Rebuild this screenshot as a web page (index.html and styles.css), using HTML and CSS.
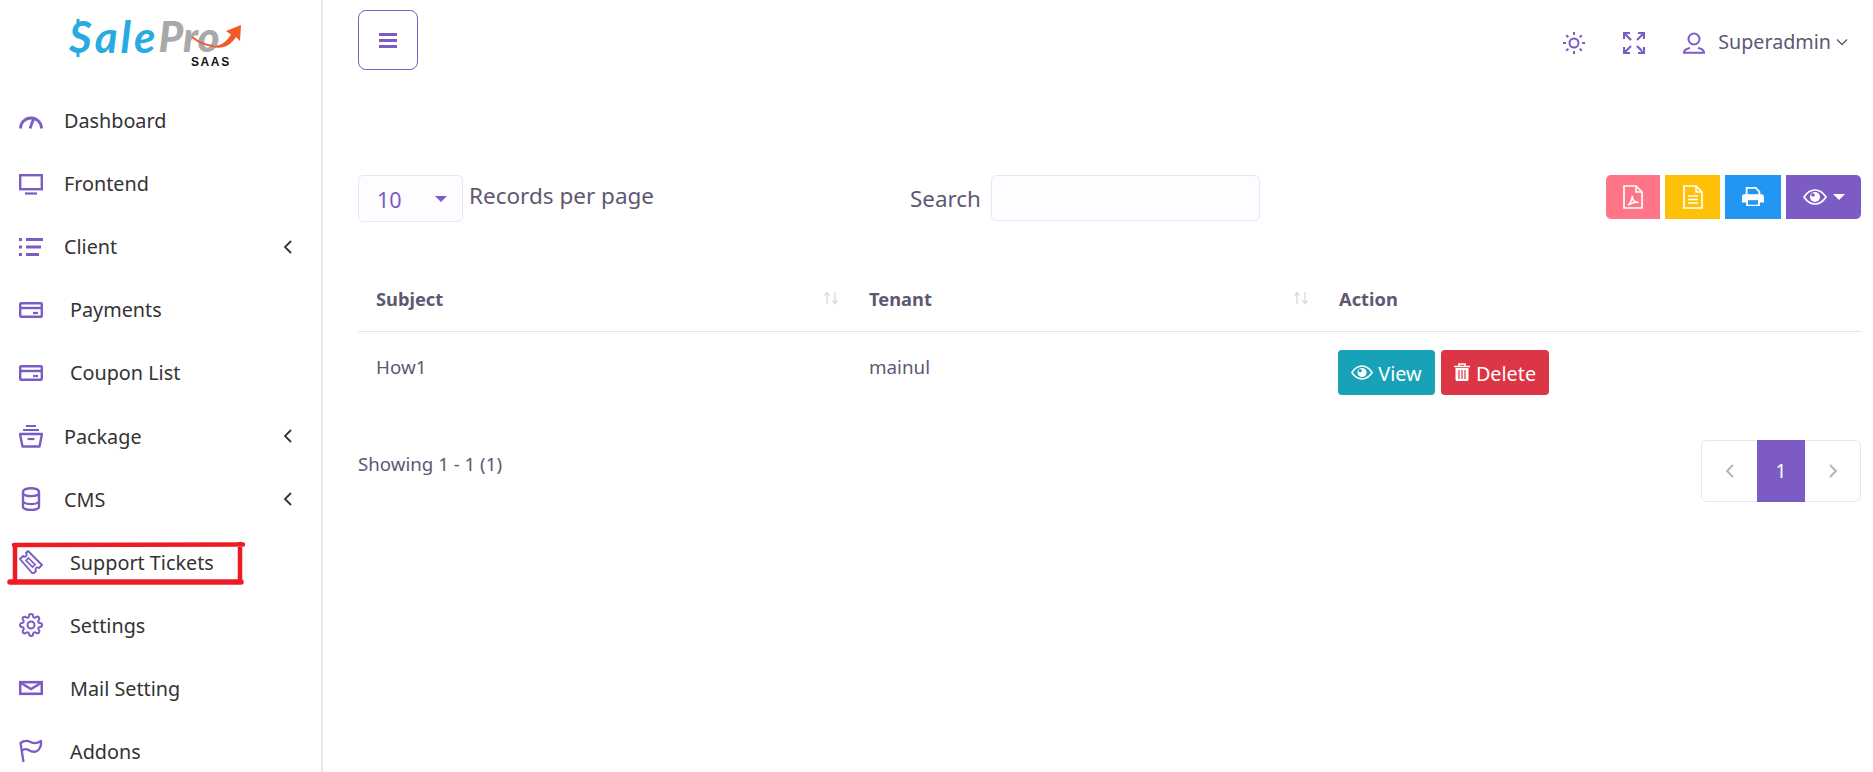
FILE: index.html
```html
<!DOCTYPE html>
<html lang="en">
<head>
<meta charset="utf-8">
<title>Support Tickets</title>
<link rel="stylesheet" href="styles.css">
</head>
<body>
<svg class="defs" width="0" height="0" aria-hidden="true">
  <symbol id="i-card" viewBox="0 0 24 24"><rect x="1.200" y="5.200" width="21.600" height="13.600" rx="1" fill="none" stroke="currentColor" stroke-width="2.400"/><path d="M1 10h22" stroke="currentColor" stroke-width="2.400"/><path d="M14 15h5" stroke="currentColor" stroke-width="2.200"/></symbol>
  <symbol id="i-eye" viewBox="0 0 24 16"><path d="M1 8c3-4.600 6.800-7 11-7s8 2.400 11 7c-3 4.600-6.800 7-11 7S4 12.600 1 8z" fill="none" stroke="currentColor" stroke-width="1.700"/><circle cx="12" cy="8" r="5" fill="currentColor"/><circle cx="10" cy="6" r="1.800" fill="var(--eye-bg)"/></symbol>
  <symbol id="i-chev" viewBox="0 0 10 16"><path d="M8 2 2 8l6 6" fill="none" stroke="currentColor" stroke-width="1.800"/></symbol>
  <symbol id="i-sort" viewBox="0 0 18 14"><path d="M5 13V2M2.500 4.500 5 1.500l2.500 3M13 1v11M10.500 9.500l2.500 3 2.500-3" fill="none" stroke="currentColor" stroke-width="1.300"/></symbol>
</svg>

<div class="app">
  <aside class="sidebar">
    <div class="logo">
      <div class="logo-word">
        <span class="logo-sale">Sale</span><span class="logo-pro">Pro</span>
        <svg class="logo-arrow" viewBox="0 0 52 28" aria-hidden="true"><path d="M2 15c6 5 13 8 21 9" fill="none" stroke="#f15a29" stroke-width="1.800"/><path d="M21 24.500C32 24 37 19 41 12.500L36 9 51 3 50 19 46 15C40 24 32 28 21 24.500z" fill="#f15a29"/></svg>
        <svg class="logo-ticks" viewBox="0 0 6 38" aria-hidden="true"><path d="M3 0v4M3 34v4" stroke="#29abe2" stroke-width="3"/></svg>
      </div>
      <div class="logo-saas">SAAS</div>
    </div>
    <nav class="nav">
      <a class="nav-item">
        <svg class="nav-icon" viewBox="0 0 24 24"><path d="M1.500 19.500A10.500 10.500 0 0 1 12 9a10.500 10.500 0 0 1 10.500 10.500" fill="none" stroke="currentColor" stroke-width="2.800"/><path d="M11 19.500 14.500 10" stroke="currentColor" stroke-width="2.800"/></svg>
        <span class="nav-label">Dashboard</span>
      </a>
      <a class="nav-item">
        <svg class="nav-icon" viewBox="0 0 24 24"><rect x="1.200" y="3.200" width="21.600" height="14" fill="none" stroke="currentColor" stroke-width="2.400"/><path d="M6 21.500h12" stroke="currentColor" stroke-width="2.200"/></svg>
        <span class="nav-label">Frontend</span>
      </a>
      <a class="nav-item">
        <svg class="nav-icon" viewBox="0 0 24 24"><path d="M7 4.500h17M7 12h15M7 19.500h13" stroke="currentColor" stroke-width="2.800"/><path d="M0 4.500h3M0 12h3M0 19.500h3" stroke="currentColor" stroke-width="2.800"/></svg>
        <span class="nav-label">Client</span>
        <svg class="nav-chev"><use href="#i-chev"/></svg>
      </a>
      <a class="nav-item nav-sub">
        <svg class="nav-icon"><use href="#i-card"/></svg>
        <span class="nav-label">Payments</span>
      </a>
      <a class="nav-item nav-sub">
        <svg class="nav-icon"><use href="#i-card"/></svg>
        <span class="nav-label">Coupon List</span>
      </a>
      <a class="nav-item">
        <svg class="nav-icon" viewBox="0 0 24 24"><path d="M7 2h10M4 6h16" stroke="currentColor" stroke-width="2.200"/><path d="M1 10h22l-2.500 12.500h-17z" fill="none" stroke="currentColor" stroke-width="2.400" stroke-linejoin="round"/><path d="M8.500 15h7" stroke="currentColor" stroke-width="2.200"/></svg>
        <span class="nav-label">Package</span>
        <svg class="nav-chev"><use href="#i-chev"/></svg>
      </a>
      <a class="nav-item">
        <svg class="nav-icon" viewBox="0 0 24 24"><path d="M4 5c0-2.500 4-3.800 8-3.800s8 1.300 8 3.800v15c0 1.800-4 3-8 3s-8-1.200-8-3z" fill="none" stroke="currentColor" stroke-width="2.400"/><path d="M4 6c0 2 4 3.200 8 3.200S20 8 20 6M4 15c2 1.600 5 2.200 8 2.200s6-.6 8-2.200" fill="none" stroke="currentColor" stroke-width="2.200"/></svg>
        <span class="nav-label">CMS</span>
        <svg class="nav-chev"><use href="#i-chev"/></svg>
      </a>
      <a class="nav-item nav-sub">
        <svg class="nav-icon" viewBox="0 0 24 24"><path d="M9 1 23 15l-3 3c-1.300-1-2.700-.7-3.200.3-.5 1-.4 2 .2 2.700l-3 3L1 9l3-3c1 .8 2.300.8 3 0s.8-2 0-3z" fill="none" stroke="currentColor" stroke-width="1.900" stroke-linejoin="round"/><path d="m9.500 8 6.500 6.500-2.500 2.500L7 10.500z" fill="none" stroke="currentColor" stroke-width="1.700"/></svg>
        <span class="nav-label">Support Tickets</span>
        <svg class="annotation" viewBox="0 0 240 46" aria-hidden="true"><path d="M3 41 234 41" fill="none" stroke="#ed1c24" stroke-width="5.500" stroke-linecap="round"/><path d="M8 41V4M7 4l229-.5M233 3v38" fill="none" stroke="#ed1c24" stroke-width="4.500" stroke-linecap="round"/></svg>
      </a>
      <a class="nav-item nav-sub">
        <svg class="nav-icon" viewBox="0 0 24 24"><circle cx="12" cy="12" r="3.500" fill="none" stroke="currentColor" stroke-width="2"/><path d="M19.400 15a1.650 1.650 0 0 0 .33 1.820l.06.06a2 2 0 0 1 0 2.830 2 2 0 0 1-2.830 0l-.06-.06a1.650 1.650 0 0 0-1.820-.33 1.650 1.650 0 0 0-1 1.510V21a2 2 0 0 1-2 2 2 2 0 0 1-2-2v-.09A1.650 1.650 0 0 0 9 19.400a1.650 1.650 0 0 0-1.820.33l-.06.06a2 2 0 0 1-2.830 0 2 2 0 0 1 0-2.830l.06-.06a1.650 1.650 0 0 0 .33-1.820 1.650 1.650 0 0 0-1.510-1H3a2 2 0 0 1-2-2 2 2 0 0 1 2-2h.09A1.650 1.650 0 0 0 4.600 9a1.650 1.650 0 0 0-.33-1.820l-.06-.06a2 2 0 0 1 0-2.830 2 2 0 0 1 2.830 0l.06.06a1.650 1.650 0 0 0 1.820.33H9a1.650 1.650 0 0 0 1-1.510V3a2 2 0 0 1 2-2 2 2 0 0 1 2 2v.09a1.650 1.650 0 0 0 1 1.510 1.650 1.650 0 0 0 1.820-.33l.06-.06a2 2 0 0 1 2.830 0 2 2 0 0 1 0 2.830l-.06.06a1.650 1.650 0 0 0-.33 1.820V9a1.650 1.650 0 0 0 1.510 1H21a2 2 0 0 1 2 2 2 2 0 0 1-2 2h-.09a1.650 1.650 0 0 0-1.510 1z" fill="none" stroke="currentColor" stroke-width="2"/></svg>
        <span class="nav-label">Settings</span>
      </a>
      <a class="nav-item nav-sub">
        <svg class="nav-icon" viewBox="0 0 24 24"><rect x="1.200" y="6.200" width="21.600" height="11.600" fill="none" stroke="currentColor" stroke-width="2.600"/><path d="m2 7 10 6 10-6" fill="none" stroke="currentColor" stroke-width="2.400"/></svg>
        <span class="nav-label">Mail Setting</span>
      </a>
      <a class="nav-item nav-sub">
        <svg class="nav-icon" viewBox="0 0 24 24"><path d="M4.500 23 1.500 4c4-3 7-2.500 10-1s6 2 10.500-1c.5 4-1 8.500-4 10s-6 .5-8.500-1-4.500-1-6.200.5" fill="none" stroke="currentColor" stroke-width="2.300" stroke-linejoin="round"/></svg>
        <span class="nav-label">Addons</span>
      </a>
    </nav>
  </aside>

  <main class="main">
    <header class="topbar">
      <button class="toggle" type="button" aria-label="Toggle menu">
        <svg viewBox="0 0 18 15" class="toggle-icon"><path d="M0 1.500h18M0 7.500h18M0 13.500h18" stroke="currentColor" stroke-width="2.800"/></svg>
      </button>
      <div class="topbar-right">
        <svg class="top-icon" viewBox="0 0 22 22"><circle cx="11" cy="11" r="4.500" fill="none" stroke="currentColor" stroke-width="2"/><path d="M11 0v3M11 19v3M0 11h3M19 11h3M3.200 3.200l2.200 2.200M16.600 16.600l2.200 2.200M3.200 18.800l2.200-2.200M16.600 5.400l2.200-2.200" stroke="currentColor" stroke-width="2"/></svg>
        <svg class="top-icon top-expand" viewBox="0 0 22 22"><path d="M1 7V1h6M15 1h6v6M21 15v6h-6M7 21H1v-6M1.500 1.500l6.500 6.500M20.500 1.500 14 8M20.500 20.500 14 14M1.500 20.500 8 14" fill="none" stroke="currentColor" stroke-width="2.200"/></svg>
        <div class="user">
          <svg class="top-icon" viewBox="0 0 22 22"><circle cx="11" cy="7" r="5.500" fill="none" stroke="currentColor" stroke-width="2"/><path d="M1 20.500c.5-3 3-4 6-4.500M21 20.500c-.5-3-3-4-6-4.500M0 20.800h22" fill="none" stroke="currentColor" stroke-width="2"/></svg>
          <span class="user-name">Superadmin</span>
          <svg class="user-chev" viewBox="0 0 12 8"><path d="m1 1.500 5 5 5-5" fill="none" stroke="currentColor" stroke-width="1.400"/></svg>
        </div>
      </div>
    </header>

    <section class="controls">
      <div class="length">
        <div class="select"><span>10</span><i class="caret"></i></div>
        <span class="length-label">Records per page</span>
      </div>
      <label class="search"><span class="search-label">Search</span><input class="search-input" type="search"></label>
      <div class="exports">
        <button class="exp exp-pdf" type="button" aria-label="PDF">
          <svg viewBox="0 0 20 24" class="exp-icon"><path d="M1 1h12l6 6v16H1z" fill="none" stroke="currentColor" stroke-width="1.700"/><path d="M13 1v6h6" fill="none" stroke="currentColor" stroke-width="1.500"/><path d="M5 20c2-1 3.500-4 4.500-9-.5 4 1 6 6 6.500-3.500-.5-7 .5-10.500 2.500z" fill="none" stroke="currentColor" stroke-width="1.500"/></svg>
        </button>
        <button class="exp exp-csv" type="button" aria-label="CSV">
          <svg viewBox="0 0 20 24" class="exp-icon"><path d="M1 1h12l6 6v16H1z" fill="none" stroke="currentColor" stroke-width="1.700"/><path d="M13 1v6h6M5 11h10M5 14.500h10M5 18h10" fill="none" stroke="currentColor" stroke-width="1.500"/></svg>
        </button>
        <button class="exp exp-print" type="button" aria-label="Print">
          <svg viewBox="0 0 24 22" class="exp-icon exp-icon-print"><path d="M5 9V1h10l4 4v4" fill="none" stroke="currentColor" stroke-width="2"/><path d="M2.500 8h19A2.500 2.500 0 0 1 24 10.500V17h-4.500v4h-15v-4H0v-6.500A2.500 2.500 0 0 1 2.500 8z" fill="currentColor"/><rect x="6.500" y="14.500" width="11" height="5" fill="#2196f3"/></svg>
        </button>
        <button class="exp exp-col" type="button" aria-label="Columns">
          <svg class="exp-eye"><use href="#i-eye"/></svg><i class="caret caret-white"></i>
        </button>
      </div>
    </section>

    <table class="table">
      <colgroup><col class="col-a"><col class="col-b"><col></colgroup>
      <thead>
        <tr>
          <th><div class="th-in">Subject<svg class="sort"><use href="#i-sort"/></svg></div></th>
          <th><div class="th-in">Tenant<svg class="sort"><use href="#i-sort"/></svg></div></th>
          <th>Action</th>
        </tr>
      </thead>
      <tbody>
        <tr>
          <td>How1</td>
          <td>mainul</td>
          <td class="td-actions">
            <button class="act act-view" type="button"><svg class="act-eye"><use href="#i-eye"/></svg><span class="act-text">View</span></button>
            <button class="act act-del" type="button">
              <svg class="act-trash" viewBox="0 0 16 18"><path d="M0 3.500h16M5 3V1h6v2" fill="none" stroke="currentColor" stroke-width="1.600"/><path d="M1.500 5h13v11.500a1.500 1.500 0 0 1-1.500 1.500H3a1.500 1.500 0 0 1-1.500-1.500z" fill="currentColor"/><path d="M5 7v9M8 7v9M11 7v9" stroke="#dc3545" stroke-width="1.200"/></svg><span class="act-text">Delete</span>
            </button>
          </td>
        </tr>
      </tbody>
    </table>

    <footer class="foot">
      <span class="showing">Showing 1 - 1 (1)</span>
      <div class="pager">
        <span class="pg"><svg class="pg-chev"><use href="#i-chev"/></svg></span>
        <span class="pg pg-active">1</span>
        <span class="pg"><svg class="pg-chev pg-next"><use href="#i-chev"/></svg></span>
      </div>
    </footer>
  </main>
</div>
</body>
</html>
```

FILE: styles.css
```css
* { box-sizing: border-box; }
html, body { margin: 0; height: 100%; overflow: hidden; }
body {
  font-family: "Noto Sans", "Open Sans", sans-serif;
  background: #fff;
  color: #5e5873;
  --purple: #7c5cc4;
  --eye-bg: #fff;
}
.defs { position: absolute; }
.app { display: flex; height: 772px; }

/* Sidebar */
.sidebar { width: 323px; flex: none; border-right: 2px solid #e8e8f4; overflow: hidden; }
.logo { height: 89px; padding: 17px 0 0 69px; position: relative; }
.logo-word { position: relative; display: flex; width: 172px; height: 38px; font-family: Lato, sans-serif; font-style: italic; font-size: 44px; line-height: 38px; }
.logo-sale { color: #29abe2; font-weight: 700; letter-spacing: 3px; }
.logo-pro { color: #a8a9ab; font-weight: 900; font-size: 42px; margin-left: 0; }
.logo-arrow { position: absolute; left: 121px; top: 5px; width: 52px; height: 28px; }
.logo-ticks { position: absolute; left: 6px; top: 2px; width: 6px; height: 38px; }
.logo-saas { position: absolute; left: 191px; top: 56px; font-family: "Liberation Sans", sans-serif; font-weight: 700; font-size: 12px; line-height: 13px; letter-spacing: 1.600px; color: #111; }
.nav { display: flex; flex-direction: column; }
.nav-item { position: relative; display: flex; align-items: center; height: 63.100px; flex: none; padding: 0 28px 0 19px; color: #333; font-size: 19.800px; }
.nav-icon { width: 24px; height: 24px; flex: none; color: var(--purple); }
.nav-label { margin-left: 21px; }
.nav-sub .nav-label { margin-left: 27px; }
.nav-chev { width: 10px; height: 16px; margin-left: auto; color: #333; }
.annotation { position: absolute; left: 7px; top: 10px; width: 240px; height: 46px; }

/* Main */
.main { flex: 1; min-width: 0; padding: 10px 12px 0 35px; }
.topbar { display: flex; justify-content: space-between; align-items: center; height: 60px; margin-bottom: 105px; }
.toggle { width: 60px; height: 60px; padding: 0; display: flex; align-items: center; justify-content: center; background: #fff; border: 1px solid var(--purple); border-radius: 8px; color: var(--purple); }
.toggle-icon { width: 18px; height: 15px; }
.topbar-right { display: flex; align-items: center; padding: 6px 13px 0 0; color: var(--purple); }
.top-icon { width: 22px; height: 22px; flex: none; }
.top-expand { margin-left: 38px; }
.user { display: flex; align-items: center; margin-left: 38px; }
.user-name { margin-left: 13px; font-size: 19.700px; color: #5e5873; position: relative; top: -2px; }
.user-chev { width: 12px; height: 8px; margin-left: 5px; color: #5e5873; position: relative; top: -1px; }

/* Controls */
.controls { display: grid; grid-template-columns: 552px 696px 1fr; height: 47px; }
.length { display: flex; align-items: center; }
.select { width: 105px; height: 47px; display: flex; align-items: center; justify-content: space-between; padding: 0 15px 0 18px; background: #fdfcff; border: 1px solid #e9e6fb; border-radius: 5px; color: var(--purple); font-size: 21.500px; }
.select span { position: relative; top: 1px; }
.caret { width: 0; height: 0; border-left: 6px solid transparent; border-right: 6px solid transparent; border-top: 6px solid var(--purple); display: block; }
.caret-white { border-top-color: #fff; }
.length-label { margin: -6px 0 0 6px; font-size: 22.500px; }
.search { display: flex; align-items: flex-start; height: 47px; }
.search-label { font-size: 22.400px; width: 81px; line-height: 47px; }
.search-input { width: 269px; height: 46px; background: #fdfcff; border: 1px solid #e9e6fb; border-radius: 5px; outline: none; }
.exports { display: flex; justify-content: flex-end; gap: 5px; height: 44px; }
.exp { height: 44px; border: 0; padding: 0; color: #fff; display: flex; align-items: center; justify-content: center; }
.exp-pdf { width: 54px; background: #ff7588; border-radius: 5px 0 0 5px; }
.exp-csv { width: 55px; background: #ffc107; }
.exp-print { width: 56px; background: #2196f3; }
.exp-col { width: 75px; background: #7c5cc4; border-radius: 0 5px 5px 0; gap: 6px; --eye-bg: #7c5cc4; }
.exp-icon { width: 20px; height: 24px; }
.exp-icon-print { width: 22px; height: 20px; }
.exp-eye { width: 24px; height: 16px; }

/* Table */
.table { width: 100%; margin-top: 44px; border-collapse: collapse; table-layout: fixed; font-size: 18.800px; }
.col-a { width: 493px; }
.col-b { width: 470px; }
th { height: 65px; padding: 0 11px 0 18px; text-align: left; font-weight: 700; font-size: 18.300px; border-bottom: 1px solid #e4e4e9; }
.th-in { display: flex; justify-content: space-between; align-items: center; }
.sort { width: 18px; height: 14px; color: #d8d8e4; }
td { padding: 22px 18px 0; vertical-align: top; line-height: 26px; }
.td-actions { padding: 18px 0 18px 17px; display: flex; gap: 6px; }
.act { height: 45px; border: 0; border-radius: 4px; color: #fff; font: inherit; font-size: 19.800px; display: flex; align-items: center; justify-content: center; padding: 0; }
.act-text { position: relative; top: 2px; }
.act-view { width: 97px; background: #17a2b8; gap: 5px; --eye-bg: #17a2b8; }
.act-del { width: 108px; background: #dc3545; gap: 6px; }
.act-eye { width: 22px; height: 15px; }
.act-trash { width: 16px; height: 18px; }

/* Footer */
.foot { display: flex; justify-content: space-between; align-items: flex-start; margin-top: 27px; }
.showing { font-size: 18.700px; line-height: 26px; margin-top: 11px; }
.pager { display: flex; height: 62px; width: 160px; border: 1px solid #e6e8ec; border-radius: 6px; }
.pg { flex: 1; display: flex; align-items: center; justify-content: center; color: #aeb2ba; }
.pg-active { flex: none; width: 48px; margin: -1px 0; background: #7c5cc4; color: #fff; font-size: 19px; }
.pg-chev { width: 10px; height: 16px; }
.pg-next { transform: scaleX(-1); }
```
